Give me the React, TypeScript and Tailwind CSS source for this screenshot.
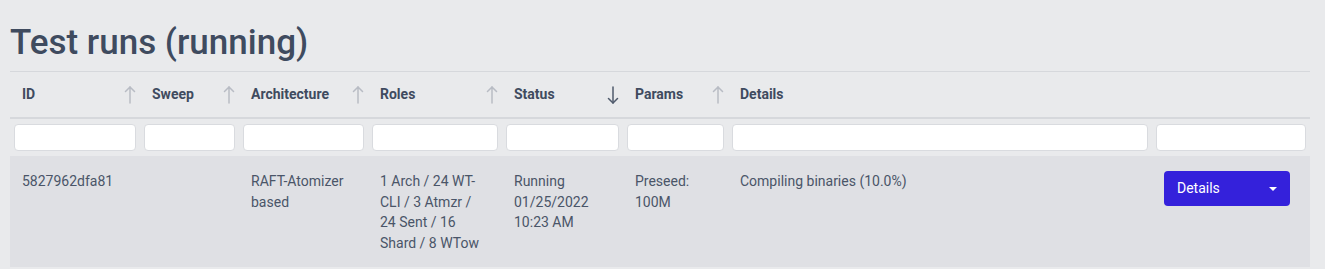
const columns = [
  { key: "id", label: "ID", width: 130, sort: "up" },
  { key: "sweep", label: "Sweep", width: 99, sort: "up" },
  { key: "arch", label: "Architecture", width: 129, sort: "up" },
  { key: "roles", label: "Roles", width: 134, sort: "up" },
  { key: "status", label: "Status", width: 121, sort: "down" },
  { key: "params", label: "Params", width: 105, sort: "up" },
  { key: "details", label: "Details", width: 424, sort: null },
  { key: "actions", label: "", width: 158, sort: null },
];

function SortArrow({ dir }: { dir: string | null }) {
  if (!dir) return null;
  const down = dir === "down";
  return (
    <svg
      width="12"
      height="18"
      viewBox="0 0 12 18"
      fill="none"
      stroke="currentColor"
      strokeWidth="1.5"
      strokeLinecap="round"
      strokeLinejoin="round"
      className={down ? "text-[#4f5a6c]" : "text-[#b8bcc4]"}
    >
      {down ? (
        <>
          <path d="M6 1v16" />
          <path d="M1.5 12.5 6 17l4.5-4.5" />
        </>
      ) : (
        <>
          <path d="M6 17V1" />
          <path d="M1.5 5.5 6 1l4.5 4.5" />
        </>
      )}
    </svg>
  );
}

export default function App() {
  return (
    <div className="min-h-[269px] w-[1325px] bg-[#e9eaec] font-['Roboto',sans-serif] text-[#4a5568]">
      <div className="px-[10px] pt-[22px] w-[1320px]">
        <h1 className="text-[35px] leading-[42px] font-medium text-[#3f4b5f] pb-[7px] border-b border-[#d6d8dc]">
          Test runs (running)
        </h1>
        <table className="table-fixed w-[1300px] border-collapse">
          <colgroup>
            {columns.map((c) => (
              <col key={c.key} style={{ width: c.width }} />
            ))}
          </colgroup>
          <thead>
            <tr className="h-[46px] border-b-2 border-[#d6d8dc]">
              {columns.map((c) => (
                <th key={c.key} className="pl-[12px] pr-[4px] text-left align-middle">
                  <div className="flex items-center justify-between">
                    <span className="text-[14px] font-bold text-[#3f4b5f]">{c.label}</span>
                    <SortArrow dir={c.sort} />
                  </div>
                </th>
              ))}
            </tr>
            <tr className="h-[38px]">
              {columns.map((c) => (
                <th key={c.key} className="px-[4px] py-0 align-middle">
                  <input
                    type="text"
                    className="block w-full h-[27px] bg-white border border-[#d9dbdf] rounded-[4px] outline-none"
                  />
                </th>
              ))}
            </tr>
          </thead>
          <tbody>
            <tr className="bg-[#dfe0e4] text-[14px] leading-[20.7px] align-top">
              <td className="px-[12px] pt-[15px] pb-[13px]">5827962dfa81</td>
              <td className="px-[12px] pt-[15px] pb-[13px]"></td>
              <td className="px-[12px] pt-[15px] pb-[13px]">RAFT-Atomizer based</td>
              <td className="px-[12px] pt-[15px] pb-[13px]">
                1 Arch / 24 WT-CLI / 3 Atmzr / 24 Sent / 16 Shard / 8 WTow
              </td>
              <td className="px-[12px] pt-[15px] pb-[13px]">
                Running
                <br />
                01/25/2022 10:23 AM
              </td>
              <td className="px-[12px] pt-[15px] pb-[13px]">Preseed: 100M</td>
              <td className="px-[12px] pt-[15px] pb-[13px]">Compiling binaries (10.0%)</td>
              <td className="px-[12px] pt-[15px] pb-[13px]">
                <button className="flex items-center justify-between w-[126px] h-[35px] px-[13px] rounded-[4px] bg-[#3421db] text-white text-[14px]">
                  <span>Details</span>
                  <span className="w-0 h-0 border-l-[4px] border-r-[4px] border-t-[4px] border-l-transparent border-r-transparent border-t-white" />
                </button>
              </td>
            </tr>
          </tbody>
        </table>
      </div>
    </div>
  );
}
